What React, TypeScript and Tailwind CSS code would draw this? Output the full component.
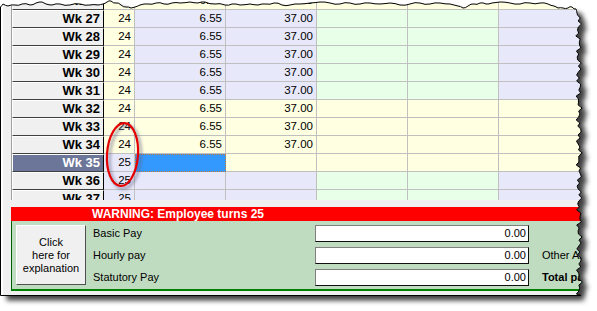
import React from "react";

type Tone = "y" | "l" | "g" | "s";

const toneClass: Record<Tone, string> = {
  y: "bg-[#ffffe1]",
  l: "bg-[#e8e8fb]",
  g: "bg-[#e8ffe8]",
  s: "bg-[#3399ff] border border-dotted border-[#c87a3a]",
};

const lav: Tone[] = ["y", "l", "l", "g", "g", "l"];
const yel: Tone[] = ["y", "y", "y", "y", "y", "y"];
const full = ["24", "6.55", "37.00"];

const rows = [
  { wk: "Wk 27", t: lav, v: full },
  { wk: "Wk 28", t: lav, v: full },
  { wk: "Wk 29", t: lav, v: full },
  { wk: "Wk 30", t: lav, v: full },
  { wk: "Wk 31", t: lav, v: full },
  { wk: "Wk 32", t: yel, v: full },
  { wk: "Wk 33", t: yel, v: full },
  { wk: "Wk 34", t: yel, v: full },
  { wk: "Wk 35", t: ["l", "s", "y", "y", "y", "y"] as Tone[], v: ["25", "", ""], sel: true },
  { wk: "Wk 36", t: ["l", "l", "l", "g", "g", "l"] as Tone[], v: ["25", "", ""] },
  { wk: "Wk 37", t: ["l", "l", "l", "g", "g", "l"] as Tone[], v: ["25", "", ""] },
];

// torn paper edge
const top: [number, number][] = [
  [0.5, 7], [3, 4], [8, 6], [15, 5], [22, 4], [30, 5], [36, 3], [42, 2], [46, 4], [52, 5],
  [60, 4], [70, 5], [80, 4], [90, 5], [98, 5], [103, 4], [107, 2], [111, 1], [116, 3],
  [121, 5], [126, 7], [131, 8], [135, 7], [140, 5], [148, 4], [156, 3], [164, 4], [172, 3],
  [180, 3], [190, 2], [198, 3], [205, 2], [215, 4], [225, 5], [232, 4], [240, 5], [250, 4],
  [258, 5], [266, 4], [274, 3], [282, 5], [290, 5], [300, 4], [310, 3], [320, 2], [330, 3],
  [340, 4], [350, 3], [360, 4], [370, 3], [380, 4], [390, 3], [400, 5], [410, 4], [420, 3],
  [430, 4], [440, 3], [450, 4], [458, 6], [463, 8], [468, 6], [474, 4], [480, 3], [486, 4],
  [492, 3], [500, 2], [510, 3], [520, 4], [530, 3], [540, 3], [548, 4], [554, 6], [558, 8],
  [563, 8], [568, 8], [572, 7], [576, 9], [577, 13],
];
const jagTop = top.flatMap(([x, y], i) => {
  const n = top[i + 1];
  if (!n) return [[x, y]];
  const mx = (x + n[0]) / 2;
  const my = (y + n[1]) / 2 + 0.8 * Math.sin(i * 2.7);
  return [[x, y], [mx, my]];
});
const right: number[][] = [];
for (let y = 15; y <= 294; y += 3) {
  const x =
    578.5 +
    1.8 * Math.sin(y * 0.83) +
    1.4 * Math.sin(y * 0.29 + 1.3) +
    0.8 * Math.sin(y * 2.1);
  right.push([x, y]);
}
const outline = [...jagTop, ...right, [581, 295.5], [0.5, 295.5]];
const tornD = "M" + outline.map((p) => p[0].toFixed(1) + "," + p[1].toFixed(1)).join(" L") + " Z";

function Row({ wk, t, v, sel }: { wk: string; t: Tone[]; v: string[]; sel?: boolean }) {
  return (
    <div className="flex h-[18px]">
      <div
        className={`box-border flex h-[18px] w-[92px] shrink-0 items-center justify-end border-t border-l border-b border-r border-t-white border-l-white border-b-[#404040] border-r-black pr-[3px] text-[13px] font-bold ${
          sel ? "bg-[#6b7699] text-white" : "bg-[#f0f0f0] text-black"
        }`}
      >
        {wk}
      </div>
      {t.map((tone, i) => (
        <div
          key={i}
          className={`box-border flex h-[18px] shrink-0 items-center justify-end pr-[3px] text-[11.5px] ${
            i === 0 ? "w-[31px]" : "w-[91px]"
          } ${tone === "s" ? "" : "border-r border-b border-[#c0c0c0]"} ${toneClass[tone]}`}
        >
          {v[i] ?? ""}
        </div>
      ))}
    </div>
  );
}

function PayRow({ label, side, bold }: { label: string; side?: string; bold?: boolean }) {
  return (
    <div className="flex h-[17px] items-center">
      <span className="w-[222px]">{label}</span>
      <div className="box-border flex h-[17px] w-[214px] items-center justify-end border border-t-[#808080] border-l-[#808080] border-b-[#101010] border-r-[#101010] bg-white pr-[2px]">
        0.00
      </div>
      {side && (
        <span className={`ml-[13px] whitespace-nowrap ${bold ? "font-bold" : ""}`}>{side}</span>
      )}
    </div>
  );
}

export default function App() {
  return (
    <div className="relative h-[311px] w-[597px] overflow-hidden bg-white font-['Liberation_Sans',Arial,sans-serif] text-[11px] text-black">
      <svg className="absolute inset-0" width="597" height="311">
        <defs>
          <filter id="blur" x="-10%" y="-10%" width="120%" height="120%">
            <feGaussianBlur stdDeviation="2.5" />
          </filter>
        </defs>
        <path d={tornD} transform="translate(6,5)" fill="#000" opacity="0.75" filter="url(#blur)" />
      </svg>

      <div className="relative h-[296px] w-[584px] overflow-hidden bg-[#f0f0f0] shadow-[inset_3px_0_0_#ffffff] [clip-path:url(#torn)]">
        <div className="ml-[11px] h-[200px] overflow-hidden border-l border-[#a0a0a0]">
          <div className="h-[10px] overflow-hidden">
            <div className="-mt-[8px]">
              <Row wk="Wk 26" t={yel} v={full} />
            </div>
          </div>
          {rows.map((r) => (
            <Row key={r.wk} {...r} />
          ))}
        </div>

        <div className="ml-[11px] mt-[7px]">
          <div className="flex h-[14px] items-center bg-[#ff0000] pl-[81px] text-[12px] font-bold text-white">
            WARNING: Employee turns 25
          </div>
          <div className="box-border flex h-[70px] border-l border-b-2 border-l-[#006000] border-b-[#008000] bg-[#c0dcc0] pl-[4px] pt-[4px]">
            <div className="box-border flex h-[60px] w-[70px] shrink-0 flex-col items-center justify-center border border-t-white border-l-white border-b-[#505050] border-r-[#505050] bg-[#f0f0f0] text-center leading-[13px]">
              <span>Click</span>
              <span>here for</span>
              <span>explanation</span>
            </div>
            <div className="ml-[7px] flex flex-col gap-[5px]">
              <PayRow label="Basic Pay" />
              <PayRow label="Hourly pay" side="Other Allowances" />
              <PayRow label="Statutory Pay" side="Total pay" bold />
            </div>
          </div>
        </div>
      </div>

      <svg className="pointer-events-none absolute inset-0" width="597" height="311">
        <defs>
          <clipPath id="torn" clipPathUnits="userSpaceOnUse">
            <path d={tornD} />
          </clipPath>
          <filter id="soft" x="-50%" y="-50%" width="200%" height="200%">
            <feGaussianBlur stdDeviation="1.5" />
          </filter>
        </defs>
        <path d={tornD} fill="none" stroke="#000" strokeWidth="1" />
        <ellipse
          cx="125"
          cy="157"
          rx="15.5"
          ry="31.5"
          transform="rotate(4 125 157)"
          fill="none"
          stroke="#606080"
          strokeWidth="3"
          opacity="0.5"
          filter="url(#soft)"
        />
        <ellipse
          cx="122.5"
          cy="154.5"
          rx="15.5"
          ry="31.5"
          transform="rotate(4 122.5 154.5)"
          fill="none"
          stroke="#e60000"
          strokeWidth="2.2"
        />
      </svg>
    </div>
  );
}
